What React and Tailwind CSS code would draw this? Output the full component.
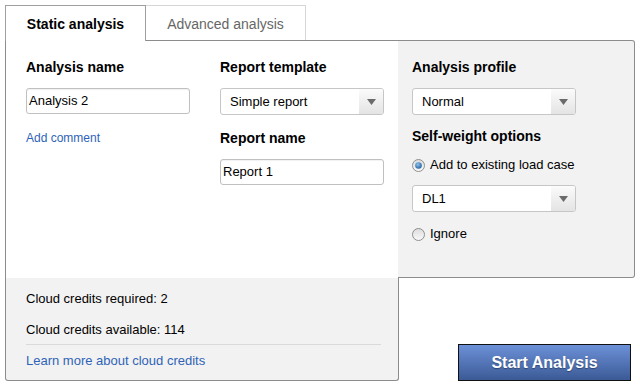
import React from "react";

/* ── SMALL CONTROLS ── */
const Select = ({ value, className = "" }) => (
  <div className={`flex h-[27px] w-[164px] items-stretch rounded-[3px] border border-[#c6c6c6] bg-white ${className}`}>
    <span className="flex flex-1 items-center pl-[9px] pt-px text-[13px] leading-[16px] text-black">{value}</span>
    <span className="flex w-[24px] items-center justify-center rounded-r-[2px] bg-linear-to-b from-[#fbfbfb] to-[#e4e4e4]">
      <svg width="9" height="6" viewBox="0 0 9 6">
        <path d="M0 0h9L4.5 6z" fill="#6b6b6b" />
      </svg>
    </span>
  </div>
);

const Input = ({ value, className = "" }) => (
  <div className={`flex h-[26px] w-[164px] items-center rounded-[3px] border border-[#c0c0c0] bg-white pl-[2px] text-[13px] leading-[16px] text-black shadow-[inset_0_1px_1px_rgba(0,0,0,0.06)] ${className}`}>
    {value}
  </div>
);

const Radio = ({ checked }) => (
  <svg width="13" height="13" viewBox="0 0 13 13" className="shrink-0">
    <defs>
      <linearGradient id={checked ? "rc" : "ru"} x1="0" y1="0" x2="0" y2="1">
        <stop offset="0" stopColor="#dcdcdc" />
        <stop offset="1" stopColor="#fafafa" />
      </linearGradient>
      <radialGradient id="dot" cx="0.4" cy="0.35" r="0.7">
        <stop offset="0" stopColor="#8fc3ee" />
        <stop offset="1" stopColor="#1d5c9e" />
      </radialGradient>
    </defs>
    <circle cx="6.5" cy="6.5" r="6" fill={`url(#${checked ? "rc" : "ru"})`} stroke="#8e8e8e" />
    {checked && <circle cx="6.5" cy="6.5" r="3.3" fill="url(#dot)" />}
  </svg>
);

const Heading = ({ children, className = "" }) => (
  <div className={`text-[14px] font-bold leading-[16px] text-black ${className}`}>{children}</div>
);

export default function App() {
  return (
    <div className="h-[387px] w-[640px] overflow-hidden bg-white font-['Liberation_Sans',Arial,sans-serif]">

      {/* ══════════ TABS ══════════ */}
      <div className="relative z-10 flex pl-[5px] pt-[5px]">
        <div className="-mb-px flex h-[36px] w-[141px] justify-center border-x border-t border-[#a0a0a0] bg-white pt-[10px] text-[14px] font-bold leading-[16px] text-black">
          Static analysis
        </div>
        <div className="flex h-[35px] w-[160px] justify-center border-r border-t border-[#d6d6d6] bg-white pt-[10px] text-[14px] leading-[16px] text-[#666]">
          Advanced analysis
        </div>
      </div>

      {/* ══════════ MAIN PANEL ══════════ */}
      <div className="ml-[5px] flex h-[238px] w-[630px]">
        {/* left white part */}
        <div className="flex w-[393px] border-l border-t border-[#8c8c8c] bg-white">
          <div className="w-[214px] pl-[20px] pt-[18px]">
            <Heading>Analysis name</Heading>
            <Input value="Analysis 2" className="mt-[13px]" />
            <div className="mt-[17px] text-[12px] leading-[14px] text-[#2f63b7]">Add comment</div>
          </div>
          <div className="pt-[18px]">
            <Heading>Report template</Heading>
            <Select value="Simple report" className="mt-[13px]" />
            <Heading className="mt-[15px]">Report name</Heading>
            <Input value="Report 1" className="mt-[13px]" />
          </div>
        </div>

        {/* right gray part */}
        <div className="flex-1 rounded-r-[3px] border-y border-r border-[#8c8c8c] bg-[#f2f2f2] pl-[14px] pt-[18px]">
          <Heading>Analysis profile</Heading>
          <Select value="Normal" className="mt-[13px]" />
          <Heading className="mt-[13px]">Self-weight options</Heading>
          <div className="mt-[13px] flex items-center gap-[5px] text-[13px] leading-[16px] text-black">
            <Radio checked />
            <span>Add to existing load case</span>
          </div>
          <Select value="DL1" className="mt-[12px]" />
          <div className="mt-[14px] flex items-center gap-[5px] text-[13px] leading-[16px] text-black">
            <Radio />
            <span>Ignore</span>
          </div>
        </div>
      </div>

      {/* ══════════ FOOTER ══════════ */}
      <div className="ml-[5px] flex w-[630px]">
        <div className="h-[103px] w-[394px] rounded-b-[3px] border-x border-b border-[#8c8c8c] bg-[#f2f2f2] pl-[20px] pr-[17px] pt-[13px] text-[13px] leading-[16px] text-black">
          <div>Cloud credits required: 2</div>
          <div className="mt-[15px]">Cloud credits available: 114</div>
          <div className="mt-[6px] h-px bg-[#dadada]" />
          <div className="mt-[8px] text-[#2f63b7]">Learn more about cloud credits</div>
        </div>
        <div className="flex flex-1 items-end justify-end pr-[4px]">
          <button className="flex h-[37px] w-[173px] items-center justify-center border border-[#111] bg-linear-to-b from-[#6d91d8] to-[#3b5a96] text-[16px] font-bold text-white [text-shadow:0_1px_1px_rgba(0,0,0,0.35)]">
            Start Analysis
          </button>
        </div>
      </div>

    </div>
  );
}
